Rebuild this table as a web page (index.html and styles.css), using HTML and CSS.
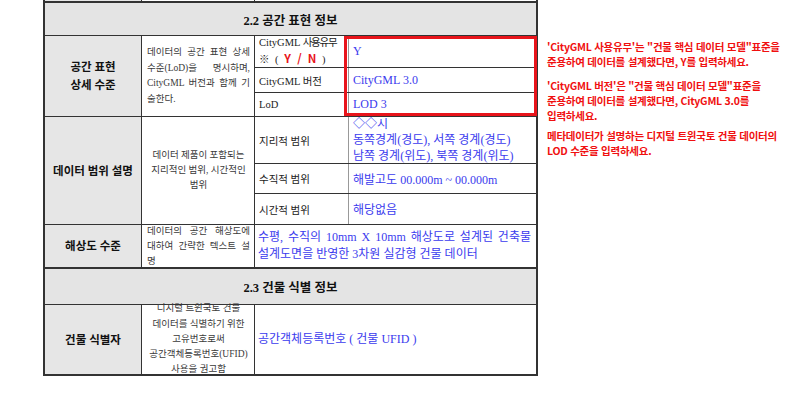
FILE: index.html
```html
<!DOCTYPE html>
<html lang="ko">
<head>
<meta charset="utf-8">
<link rel="stylesheet" href="styles.css">
</head>
<body>
<div class="page">
  <div class="sheet">
    <div class="spec">
      <div class="cell strip grey"></div>
      <div class="cell strip"></div>
      <div class="cell strip span2"></div>

      <div class="cell sec span4">2.2 공간 표현 정보</div>

      <div class="cell lbl rs3"><div>공간 표현<br>상세 수준</div></div>
      <div class="cell desc rs3">
        <div class="blk">
          <div class="jl">데이터의 공간 표현 상세</div>
          <div class="jl">수준(LoD)을 명시하며,</div>
          <div class="jl">CityGML 버전과 함께 기</div>
          <div>술한다.</div>
        </div>
      </div>
      <div class="cell key two"><div>CityGML <span class="tight">사용유무</span><br><span class="mark">※ ( <b class="yn">Y / N</b> )</span></div></div>
      <div class="cell val">Y</div>
      <div class="cell key">CityGML 버전</div>
      <div class="cell val">CityGML 3.0</div>
      <div class="cell key">LoD</div>
      <div class="cell val">LOD 3</div>

      <div class="cell lbl rs3"><div>데이터 범위 설명</div></div>
      <div class="cell desc center rs3"><div>데이터 제품이 포함되는<br>지리적인 범위, 시간적인<br>범위</div></div>
      <div class="cell key">지리적 범위</div>
      <div class="cell val geo"><div>◇◇시<br>동쪽경계(경도), 서쪽 경계(경도)<br>남쪽 경계(위도), 북쪽 경계(위도)</div></div>
      <div class="cell key">수직적 범위</div>
      <div class="cell val">해발고도 00.000m ~ 00.000m</div>
      <div class="cell key">시간적 범위</div>
      <div class="cell val">해당없음</div>

      <div class="cell lbl"><div>해상도 수준</div></div>
      <div class="cell desc d3">
        <div class="blk">
          <div class="jl">데이터의 공간 해상도에</div>
          <div class="jl">대하여 간략한 텍스트 설</div>
          <div>명</div>
        </div>
      </div>
      <div class="cell wide span2">
        <div class="blk">
          <div class="jl">수평, 수직의 10mm X 10mm 해상도로 설계된 건축물</div>
          <div>설계도면을 반영한 3차원 실감형 건물 데이터</div>
        </div>
      </div>

      <div class="cell sec span4">2.3 건물 식별 정보</div>

      <div class="cell lbl"><div>건물 식별자</div></div>
      <div class="cell desc center d4"><div>디지털 트윈국토 건물<br>데이터를 식별하기 위한<br>고유번호로써<br>공간객체등록번호(UFID)<br>사용을 권고함</div></div>
      <div class="cell wide span2">공간객체등록번호 ( 건물 UFID )</div>
    </div>
    <div class="redbox"></div>
  </div>
  <div class="notes">
    <p class="n1">'CityGML 사용유무'는 "건물 핵심 데이터 모델"표준을<br>준용하여 데이터를 설계했다면, Y를 입력하세요.</p>
    <p class="n2">'CityGML 버전'은 "건물 핵심 데이터 모델"표준을<br>준용하여 데이터를 설계했다면, CityGML 3.0를<br>입력하세요.</p>
    <p class="n3">메타데이터가 설명하는 디지털 트윈국토 건물 데이터의<br>LOD 수준을 입력하세요.</p>
  </div>
</div>
</body>
</html>
```

FILE: styles.css
```css
* { box-sizing: border-box; }
html, body { margin: 0; padding: 0; background: #fff; }
body { font-family: "Liberation Serif", "Noto Sans CJK KR", serif; color: #222; }

.page { display: flex; align-items: flex-start; padding-left: 43px; }

.sheet { position: relative; width: 495px; flex: none; }

.spec {
  display: grid;
  grid-template-columns: 96px 112px 93px 187px;
  grid-template-rows: 1px 33px 31px 24px 23px 46px 29px 30px 42px 36px 69px;
  gap: 1px;
  background: #333;
  border: 2px solid #333;
  border-top: 0;
  font-size: 10.5px;
}

.cell {
  background: #fff;
  display: flex;
  align-items: center;
  padding: 0 4px;
  min-width: 0;
  white-space: nowrap;
}
.span2 { grid-column: span 2; }
.span4 { grid-column: span 4; }
.rs3 { grid-row: span 3; }

.strip { padding: 0; }
.grey { background: #e6e6e6; }

.sec {
  background: #e4e4e4;
  justify-content: center;
  font-weight: bold;
  font-size: 12.5px;
  color: #111;
  border-top: 1px solid #333;
}

.lbl {
  background: #e6e6e6;
  justify-content: center;
  text-align: center;
  font-weight: bold;
  font-size: 11.5px;
  line-height: 18px;
  color: #111;
}

.desc {
  font-size: 9.5px;
  color: #3a3a3a;
  line-height: 15.5px;
  padding: 0 4px 0 5px;
}
.desc .blk { width: 100%; }
.desc.center { justify-content: center; text-align: center; line-height: 15px; }
.d3 { line-height: 15px; }
.desc.d4 { line-height: 15.3px; }
.jl { text-align: justify; text-align-last: justify; }

.key { color: #222; padding-right: 0; }
.key.two { line-height: 16px; }
.tight { letter-spacing: -1.2px; }
.mark { word-spacing: 3px; }
.yn {
  color: #e8141b;
  font-family: "Noto Sans CJK KR", sans-serif;
  font-size: 11.5px;
  line-height: 14px;
  word-spacing: 3px;
}

.val {
  color: #3b3bee;
  font-size: 12px;
  margin-left: -1px;
  border-left: 1px solid #999;
  padding-left: 4px;
}
.val.geo { line-height: 16px; }

.wide {
  color: #3b3bee;
  font-size: 12px;
  line-height: 17px;
  padding: 0 5px 0 3px;
}
.wide .blk { width: 100%; }

.redbox {
  position: absolute;
  left: 301px;
  top: 36px;
  width: 193px;
  height: 80px;
  border: 3px solid #e8141b;
}

.notes {
  margin-left: 9px;
  padding-top: 39px;
  font-family: "Noto Sans CJK KR", sans-serif;
  font-weight: bold;
  font-size: 10.5px;
  line-height: 15px;
  color: #f01010;
  letter-spacing: -0.25px;
  white-space: nowrap;
}
.notes p { margin: 0; }
.n1 { margin-bottom: 9px !important; }
.n2 { margin-bottom: 5px !important; }
```
